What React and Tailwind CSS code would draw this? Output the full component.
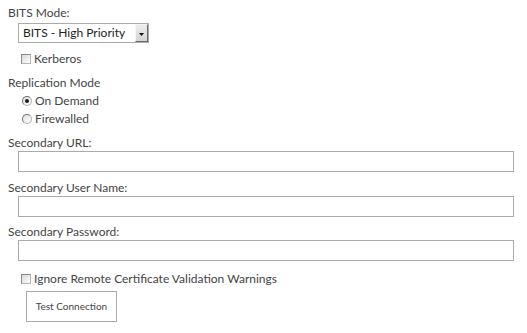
import React from "react";

const font = { fontFamily: 'Lato, "Open Sans", sans-serif' };

const CheckBox = () => (
  <span className="inline-block w-[10px] h-[10px] border border-[#8a8a8a] border-r-[#b5b5b5] border-b-[#b5b5b5] bg-gradient-to-br from-[#d8d8d8] to-white shrink-0" />
);

const Radio = ({ checked }) => (
  <span className="inline-flex items-center justify-center w-[10px] h-[10px] rounded-full border border-[#b0b0b0] border-l-[#6f6f6f] border-t-[#6f6f6f] bg-gradient-to-br from-[#e0e0e0] to-white shrink-0">
    {checked && <span className="block w-[4px] h-[4px] rounded-full bg-[#1a1a1a]" />}
  </span>
);

const Label = ({ children, className = "" }) => (
  <div className={`h-[17px] leading-[17px] text-[12px] text-[#444444] ${className}`}>{children}</div>
);

const TextBox = () => (
  <div className="ml-[10px] w-[496px] h-[21px] border border-[#ababab] bg-white" />
);

export default function App() {
  return (
    <div className="w-[527px] h-[333px] bg-white pl-2 pt-[4px]" style={font}>
      <Label>BITS Mode:</Label>

      {/* select */}
      <div className="ml-[10px] mt-[2px] w-[131px] h-[20px] border border-[#ababab] flex items-center">
        <span className="flex-1 pl-[4px] text-[12px] leading-[18px] text-[#222222]">BITS - High Priority</span>
        <span className="w-[13px] h-[18px] border border-[#f4f4f4] border-r-[#6a6a6a] border-b-[#6a6a6a] bg-gradient-to-b from-[#ededed] to-[#d4d4d4] flex items-center justify-center pt-[3px]">
          <svg width="5" height="3" viewBox="0 0 5 3">
            <path d="M0 0h5L2.5 3z" fill="#111111" />
          </svg>
        </span>
      </div>

      <div className="mt-[7px] h-[18px] flex items-center gap-[2px] pl-[13px] text-[12px] text-[#444444]">
        <CheckBox />
        <span className="ml-[1px]">Kerberos</span>
      </div>

      <Label className="mt-[6px] h-[18px] leading-[18px]">Replication Mode</Label>

      <div className="h-[18px] flex items-center gap-[3px] pl-[14px] text-[12px] text-[#444444]">
        <Radio checked />
        <span>On Demand</span>
      </div>
      <div className="h-[17px] flex items-center gap-[3px] pl-[14px] text-[12px] text-[#444444]">
        <Radio />
        <span>Firewalled</span>
      </div>

      <Label className="mt-[7px]">Secondary URL:</Label>
      <TextBox />

      <Label className="mt-[7px]">Secondary User Name:</Label>
      <TextBox />

      <Label className="mt-[6px]">Secondary Password:</Label>
      <TextBox />

      <div className="mt-[9px] h-[18px] flex items-center gap-[2px] pl-[13px] text-[12px] text-[#444444]">
        <CheckBox />
        <span className="ml-[1px]">Ignore Remote Certificate Validation Warnings</span>
      </div>

      <button className="mt-[3px] ml-[18px] w-[91px] h-[31px] border border-[#ababab] bg-white text-[10px] text-[#444444]">
        Test Connection
      </button>
    </div>
  );
}
